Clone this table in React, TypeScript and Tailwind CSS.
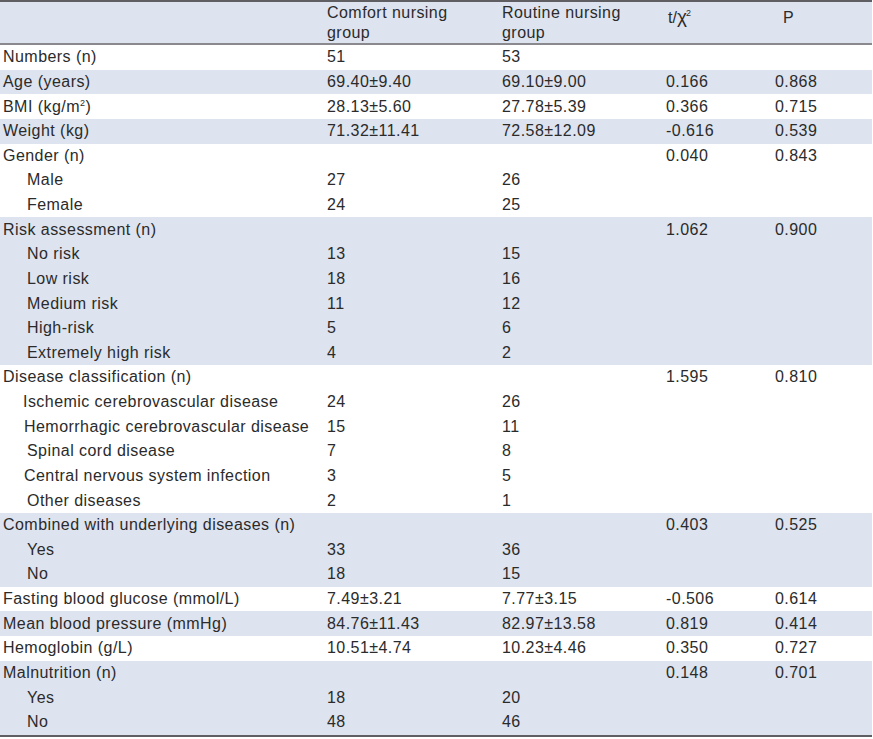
import React from "react";

type Row = {
  label: React.ReactNode;
  indent?: number;
  a?: string;
  b?: string;
  t?: string;
  p?: string;
};

type Group = { shaded: boolean; rows: Row[] };

const groups: Group[] = [
  { shaded: false, rows: [{ label: "Numbers (n)", a: "51", b: "53" }] },
  { shaded: true, rows: [{ label: "Age (years)", a: "69.40±9.40", b: "69.10±9.00", t: "0.166", p: "0.868" }] },
  {
    shaded: false,
    rows: [
      {
        label: (
          <>
            BMI (kg/m<sup className="text-[9px] -top-[6px]">2</sup>)
          </>
        ),
        a: "28.13±5.60",
        b: "27.78±5.39",
        t: "0.366",
        p: "0.715",
      },
    ],
  },
  { shaded: true, rows: [{ label: "Weight (kg)", a: "71.32±11.41", b: "72.58±12.09", t: "-0.616", p: "0.539" }] },
  {
    shaded: false,
    rows: [
      { label: "Gender (n)", t: "0.040", p: "0.843" },
      { label: "Male", indent: 27, a: "27", b: "26" },
      { label: "Female", indent: 27, a: "24", b: "25" },
    ],
  },
  {
    shaded: true,
    rows: [
      { label: "Risk assessment (n)", t: "1.062", p: "0.900" },
      { label: "No risk", indent: 27, a: "13", b: "15" },
      { label: "Low risk", indent: 27, a: "18", b: "16" },
      { label: "Medium risk", indent: 27, a: "11", b: "12" },
      { label: "High-risk", indent: 27, a: "5", b: "6" },
      { label: "Extremely high risk", indent: 27, a: "4", b: "2" },
    ],
  },
  {
    shaded: false,
    rows: [
      { label: "Disease classification (n)", t: "1.595", p: "0.810" },
      { label: "Ischemic cerebrovascular disease", indent: 23, a: "24", b: "26" },
      { label: "Hemorrhagic cerebrovascular disease", indent: 24, a: "15", b: "11" },
      { label: "Spinal cord disease", indent: 27, a: "7", b: "8" },
      { label: "Central nervous system infection", indent: 24, a: "3", b: "5" },
      { label: "Other diseases", indent: 27, a: "2", b: "1" },
    ],
  },
  {
    shaded: true,
    rows: [
      { label: "Combined with underlying diseases (n)", t: "0.403", p: "0.525" },
      { label: "Yes", indent: 27, a: "33", b: "36" },
      { label: "No", indent: 27, a: "18", b: "15" },
    ],
  },
  { shaded: false, rows: [{ label: "Fasting blood glucose (mmol/L)", a: "7.49±3.21", b: "7.77±3.15", t: "-0.506", p: "0.614" }] },
  { shaded: true, rows: [{ label: "Mean blood pressure (mmHg)", a: "84.76±11.43", b: "82.97±13.58", t: "0.819", p: "0.414" }] },
  { shaded: false, rows: [{ label: "Hemoglobin (g/L)", a: "10.51±4.74", b: "10.23±4.46", t: "0.350", p: "0.727" }] },
  {
    shaded: true,
    rows: [
      { label: "Malnutrition (n)", t: "0.148", p: "0.701" },
      { label: "Yes", indent: 27, a: "18", b: "20" },
      { label: "No", indent: 27, a: "48", b: "46" },
    ],
  },
];

export default function App() {
  return (
    <div
      className="w-[873px] h-[739px] bg-white text-[#2b2b2b]"
      style={{ fontFamily: '"Liberation Sans", Arial, sans-serif' }}
    >
      <div className="w-[872px] border-t-[2px] border-b-[2px] border-[#5f5f63] text-[16px] leading-[20px] tracking-[0.45px]">
        <div className="grid grid-cols-[323px_175px_164px_109px_101px] h-[43px] bg-[#dde3ef] border-b-[2px] border-[#8a8a8e]">
          <div />
          <div className="pl-[4px] pt-[1px]">
            Comfort nursing
            <br />
            group
          </div>
          <div className="pl-[4px] pt-[1px]">
            Routine nursing
            <br />
            group
          </div>
          <div className="pl-[6px] pt-[5px] tracking-normal">
            t/<span className="text-[19px] tracking-[-1px]">χ</span>
            <sup className="text-[9px] -top-[7px]">2</sup>
          </div>
          <div className="pl-[12px] pt-[6px]">P</div>
        </div>
        {groups.map((g, gi) => (
          <div key={gi} className={g.shaded ? "bg-[#dde3ef]" : "bg-white"}>
            {g.rows.map((r, ri) => (
              <div
                key={ri}
                className="grid grid-cols-[323px_175px_164px_109px_101px] h-[24.64px] items-center"
              >
                <div className="whitespace-nowrap" style={{ paddingLeft: r.indent ?? 3 }}>
                  {r.label}
                </div>
                <div className="pl-[4px]">{r.a}</div>
                <div className="pl-[4px]">{r.b}</div>
                <div className="pl-[4px]">{r.t}</div>
                <div className="pl-[4px]">{r.p}</div>
              </div>
            ))}
          </div>
        ))}
      </div>
    </div>
  );
}
